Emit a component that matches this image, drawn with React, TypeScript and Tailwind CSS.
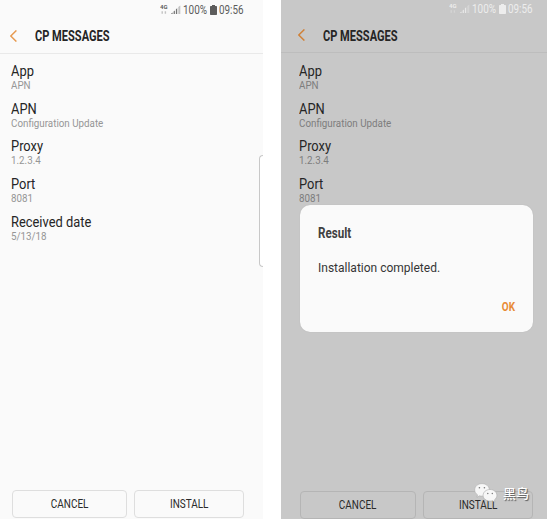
import React from "react";

const rows = [
  ["App", "APN"],
  ["APN", "Configuration Update"],
  ["Proxy", "1.2.3.4"],
  ["Port", "8081"],
  ["Received date", "5/13/18"],
];

function StatusBar({ dim }: { dim?: boolean }) {
  return (
    <div className={`flex h-[18px] items-center justify-end ${dim ? "pr-[14px] text-[#ededed]" : "pr-[19px] pt-px text-[#5c5c5c]"}`}>
      <svg width="22" height="12" viewBox="0 0 22 12" className="mr-[2px]" fill="currentColor">
        <text x="0" y="5.2" fontSize="5.6" fontWeight="700" fontFamily="Roboto" textLength="7.5" lengthAdjust="spacingAndGlyphs">4G</text>
        <path d="M1.5 7.2h1.4v2.600H1.500zM4.700 7.200h1.400v2.600H4.700z" opacity=".35" />
        <path d="M11 10h1.600V8.600L11 9.800zM13.600 10h1.300V6.400l-1.300 1zM15.900 10h1.300V4.200l-1.300 1z" opacity=".85" />
        <path d="M18.300 10h2V1.400l-2 1.600z" opacity=".35" />
      </svg>
      <span className="-ml-px block w-[25px] text-[12px] leading-[18px]"><span className="inline-block origin-left scale-x-[0.83]">100%</span></span>
      <svg width="7" height="10" viewBox="0 0 7 10" className="mr-[2px] ml-[2px]" fill="currentColor">
        <path d="M2 0h3v1h1.300q.7 0 .7.7v7.600q0 .7-.7.7H.7Q0 10 0 9.300V1.700Q0 1 .7 1H2z" />
      </svg>
      <span className="block w-[25px] text-[12px] leading-[18px]"><span className="inline-block origin-left scale-x-[0.82]">09:56</span></span>
    </div>
  );
}

function Header({ dim }: { dim?: boolean }) {
  return (
    <div className={`flex items-center border-b ${dim ? "h-[35px] border-[#bdbdbd] pl-[17px]" : "h-[36px] border-[#e9e9e9] pl-[10px]"}`}>
      <svg width="7" height="12" viewBox="0 0 7 12" fill="none" stroke={dim ? "#d08138" : "#e79a50"} strokeWidth="1.4">
        <path d="M6.400.4.8 6l5.600 5.600" />
      </svg>
      <span className="ml-[18px] block origin-left scale-x-[0.79] pt-px text-[14px] leading-[18px] font-bold whitespace-nowrap text-[#252525]">CP MESSAGES</span>
    </div>
  );
}

function Rows({ dim }: { dim?: boolean }) {
  return (
    <div className={`flex flex-col ${dim ? "pt-[10px] pl-[18px]" : "pt-[9px] pl-[11px]"}`}>
      {rows.slice(0, dim ? 4 : 5).map(([title, value]) => (
        <div key={title} className="h-[37.700px]">
          <div className="origin-left scale-x-[0.92] text-[14px] leading-[16px] text-[#252525]">{title}</div>
          <div className={`origin-left scale-x-[0.98] text-[10px] leading-[13px] ${dim ? "text-[#7d7d7d]" : "text-[#969696]"}`}>{value}</div>
        </div>
      ))}
    </div>
  );
}

function Button({ label, className }: { label: string; className: string }) {
  return (
    <div className={`flex h-[28px] items-center justify-center rounded-[4px] border text-[12px] text-[#2b2b2b] ${className}`}>
      <span className="inline-block scale-x-[0.83]">{label}</span>
    </div>
  );
}

function WeChat() {
  return (
    <svg width="24" height="20" viewBox="0 0 24 20">
      <g fill="#f7f7f7" stroke="#a9a9a9" strokeWidth=".6">
        <path d="M8 .6c4.200 0 7.300 2.800 7.300 6.300S12.200 13.200 8 13.200q-1.300 0-2.500-.4L2.900 14.300l.6-2.500C1.700 10.600.7 8.900.7 6.900.7 3.400 3.800.6 8 .6z" />
        <path d="M16 6.500c3.900 0 6.900 2.600 6.900 5.800 0 1.800-.9 3.400-2.400 4.500l.5 2.300-2.500-1.400q-1.200.4-2.500.4c-3.900 0-6.900-2.600-6.900-5.800s3-5.800 6.900-5.800z" />
      </g>
      <g fill="#777">
        <circle cx="5.400" cy="4.700" r=".8" />
        <circle cx="10.400" cy="4.700" r=".8" />
        <circle cx="13.800" cy="10.500" r=".7" />
        <circle cx="18.300" cy="10.500" r=".7" />
      </g>
    </svg>
  );
}

export default function App() {
  return (
    <div className="flex h-[519px] w-[547px] overflow-hidden bg-white font-[Roboto,sans-serif]">
      <section className="relative flex w-[263px] flex-col bg-[#fafafa]">
        <StatusBar />
        <Header />
        <Rows />
        <div className="absolute top-[155px] right-0 h-[112px] w-[4px] rounded-l-[4px] border-y border-l border-[#c8c8c8] bg-white" />
        <div className="mt-auto mb-px flex gap-[7px] pl-3">
          <Button label="CANCEL" className="w-[115px] border-[#dedede]" />
          <Button label="INSTALL" className="w-[110px] border-[#dedede]" />
        </div>
      </section>
      <section className="relative ml-[18px] flex w-[266px] flex-col bg-[#c8c8c8]">
        <StatusBar dim />
        <Header dim />
        <Rows dim />
        <div className="mt-auto flex gap-[7px] pl-[19px]">
          <Button label="CANCEL" className="w-[116px] border-[#b5b5b5]" />
          <Button label="INSTALL" className="w-[110px] border-[#b5b5b5]" />
        </div>
        <div className="absolute top-[205px] left-[19px] flex h-[127px] w-[233px] flex-col rounded-[10px] bg-[#fafafa] px-[18px] pt-[19px] shadow-[0_0_1px_#aaa]">
          <span className="block origin-left scale-x-[0.83] text-[14px] leading-[18px] font-bold text-[#404040]">Result</span>
          <span className="mt-[17px] text-[12px] leading-[18px] text-[#353535]">Installation completed.</span>
          <span className="mt-[21px] block origin-right scale-x-[0.83] text-right text-[12px] leading-[18px] font-bold text-[#e88b36]">OK</span>
        </div>
        <div className="absolute top-[483px] left-[193px] flex items-center gap-[5px]">
          <WeChat />
          <span className="font-['Noto_Sans_CJK_SC',sans-serif] text-[13px] leading-[20px] font-medium text-white [text-shadow:1px_1px_1px_#555]">黑鸟</span>
        </div>
      </section>
    </div>
  );
}
